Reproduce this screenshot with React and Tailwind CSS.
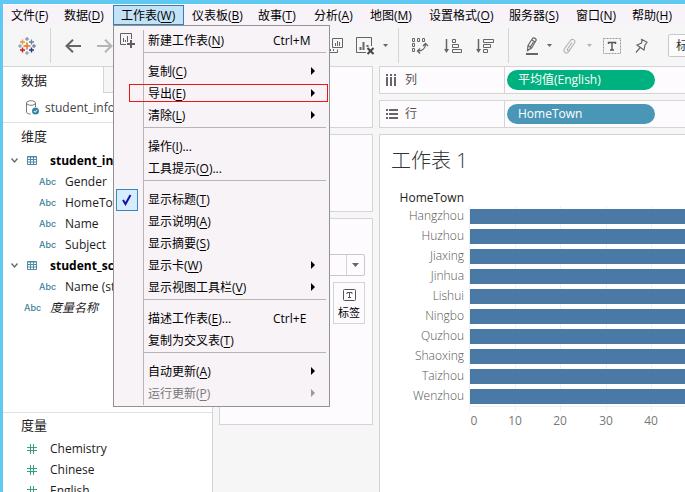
import React from "react";

const uiFont = "font-['Open_Sans','Noto_Sans_CJK_SC',sans-serif]";

const menus = [
  ["文件", "F", "w-[53px]"],
  ["数据", "D", "w-[57px]"],
  ["工作表", "W", "w-[71px]"],
  ["仪表板", "B", "w-[66px]"],
  ["故事", "T", "w-[56px]"],
  ["分析", "A", "w-[56px]"],
  ["地图", "M", "w-[59px]"],
  ["设置格式", "O", "w-[80px]"],
  ["服务器", "S", "w-[67px]"],
  ["窗口", "N", "w-[56px]"],
  ["帮助", "H", "w-[56px]"],
];

const worksheetMenu = [
  { label: "新建工作表", mnemonic: "N", shortcut: "Ctrl+M", icon: "new" },
  null,
  { label: "复制", mnemonic: "C", submenu: true },
  { label: "导出", mnemonic: "E", submenu: true, marked: true },
  { label: "清除", mnemonic: "L", submenu: true },
  null,
  { label: "操作", mnemonic: "I", more: true },
  { label: "工具提示", mnemonic: "O", more: true },
  null,
  { label: "显示标题", mnemonic: "T", icon: "check" },
  { label: "显示说明", mnemonic: "A" },
  { label: "显示摘要", mnemonic: "S" },
  { label: "显示卡", mnemonic: "W", submenu: true },
  { label: "显示视图工具栏", mnemonic: "V", submenu: true },
  null,
  { label: "描述工作表", mnemonic: "E", more: true, shortcut: "Ctrl+E" },
  { label: "复制为交叉表", mnemonic: "T" },
  null,
  { label: "自动更新", mnemonic: "A", submenu: true },
  { label: "运行更新", mnemonic: "P", submenu: true, disabled: true },
];

function NewSheetIcon() {
  return (
    <svg width="16" height="16" viewBox="0 0 16 16" fill="none" stroke="#5f5f5f">
      <path d="M6 11.5H.5V.5h11V6" />
      <path d="M3.5 5v4M5.5 7v2M7.5 3v6" />
      <path d="M11 7v8M7 11h8" strokeWidth="2" />
    </svg>
  );
}

function CheckIcon() {
  return (
    <svg width="10" height="12" viewBox="0 0 10 12" fill="none" stroke="#1111a8" strokeWidth="2">
      <path d="M1 6l2.5 4L8.5 1" />
    </svg>
  );
}

function Caret({ className }) {
  return (
    <svg className={className} width="5" height="3" viewBox="0 0 5 3" fill="currentColor">
      <path d="M0 0h5L2.5 3z" />
    </svg>
  );
}

function MenuRow({ item }) {
  return (
    <button
      type="button"
      role="menuitem"
      disabled={item.disabled}
      className="relative flex h-[22px] w-full items-stretch text-left text-black disabled:text-[#787878]"
    >
      <span className="flex w-[30px] shrink-0 items-center border-r border-[#b8b5b8] pl-[2px]">
        {item.icon === "new" && <span className="pl-1"><NewSheetIcon /></span>}
        {item.icon === "check" && (
          <span className="flex size-[22px] items-center justify-center border border-[#3c87ba] bg-[#d6ecff]">
            <CheckIcon />
          </span>
        )}
      </span>
      <span className="flex-1 whitespace-nowrap pl-1 leading-[22px]">
        {item.label}(<u className="underline-offset-2">{item.mnemonic}</u>){item.more && "..."}
      </span>
      <span className="w-14 shrink-0 leading-[22px]">
        {item.shortcut}
        {item.submenu && (
          <svg className="ml-[38px] mt-[6px]" width="4" height="8" viewBox="0 0 4 8" fill={item.disabled ? "#999" : "#000"}>
            <path d="M0 0l4 4-4 4z" />
          </svg>
        )}
      </span>
      {item.marked && <span className="absolute left-[15px] right-px top-px h-[18px] border border-[#f01414]" />}
    </button>
  );
}

function WorksheetMenu() {
  return (
    <div
      role="menu"
      className="absolute left-0 top-full z-10 w-[217px] border border-[#949194] bg-[#f7f3f7] pb-px pt-1"
    >
      {worksheetMenu.map((item, i) =>
        item ? (
          <MenuRow key={i} item={item} />
        ) : (
          <div key={i} role="separator" className="flex h-[9px]">
            <span className="w-[30px] border-r border-[#b8b5b8]" />
            <span className="mr-[3px] flex-1 border-t border-[#b8b5b8]" />
          </div>
        )
      )}
    </div>
  );
}

function MenuBar() {
  return (
    <nav className="flex h-[21px] shrink-0 border-t border-[#fdfbfd] bg-[#f7f3f8]">
      {menus.map(([label, key, width]) => {
        const open = key === "W";
        return (
          <div key={key} className="relative shrink-0">
            <button
              type="button"
              className={
                "h-5 whitespace-nowrap border px-[7px] text-left leading-[20px] text-black " +
                width +
                (open ? " border-[#3a7fb0] bg-[#c2e3f6]" : " border-transparent")
              }
            >
              {label}(<u className="underline-offset-2">{key}</u>)
            </button>
            {open && <WorksheetMenu />}
          </div>
        );
      })}
    </nav>
  );
}

function Logo() {
  return (
    <svg width="18" height="18" viewBox="0 0 18 18" fill="none">
      <path d="M9 5.5v7M5.5 9h7" stroke="#e8762d" strokeWidth="1.6" />
      <path d="M4.5 2.5v5M2 5h5" stroke="#e9963c" strokeWidth="1.3" />
      <path d="M13.5 2.5v5M11 5h5" stroke="#59879b" strokeWidth="1.3" />
      <path d="M4.5 10.5v5M2 13h5" stroke="#c72035" strokeWidth="1.5" />
      <path d="M13.5 10.5v5M11 13h5" stroke="#1f457e" strokeWidth="1.5" />
      <path d="M9 0v4M7 2h4" stroke="#5b879b" />
      <path d="M9 14v4M7 16h4" stroke="#7199a6" />
      <path d="M2 7v4M0 9h4" stroke="#7099a6" />
      <path d="M16 7v4M14 9h4" stroke="#5b6591" />
    </svg>
  );
}

function ToolButton({ label, className, children }) {
  return (
    <button type="button" aria-label={label} className={"flex shrink-0 items-center justify-center " + className}>
      {children}
    </button>
  );
}

function Divider({ className }) {
  return <span className={"h-[35px] w-px shrink-0 bg-[#d4d4d4] " + className} />;
}

function Toolbar() {
  return (
    <div className="flex h-[41px] shrink-0 items-center bg-[#f6f6f6] text-[#666]">
      <ToolButton label="Tableau" className="w-[47px]"><Logo /></ToolButton>
      <Divider className="" />
      <ToolButton label="撤消" className="ml-[14px] w-4">
        <svg width="16" height="14" viewBox="0 0 16 14" fill="none" stroke="#666" strokeWidth="2"><path d="M16 7H1.5M8 .8L1.5 7 8 13.2" /></svg>
      </ToolButton>
      <ToolButton label="重做" className="ml-4 w-4">
        <svg width="16" height="14" viewBox="0 0 16 14" fill="none" stroke="#b4b4b4" strokeWidth="2"><path d="M0 7h14.500M8 .8L14.500 7 8 13.200" /></svg>
      </ToolButton>
      <ToolButton label="复制工作表" className="ml-[212px] w-[18px]">
        <svg width="18" height="18" viewBox="0 0 18 18" fill="none" stroke="#666">
          <path d="M7.500 1.500h10v9h-10z" /><path d="M10.500 6v3M12.500 4v5M14.500 5v4" />
          <path d="M5 6.500H.5v9h12v-3M3.500 11v3M5.500 12v2M8.500 12v2" />
        </svg>
      </ToolButton>
      <ToolButton label="清除工作表" className="ml-3 w-5">
        <svg width="20" height="18" viewBox="0 0 20 18" fill="none" stroke="#666">
          <path d="M16.500 9V.5H1.500v15H11" />
          <path d="M5.500 10v3M8.500 5v8M12.500 8v2" strokeWidth="2" />
          <path d="M12.500 11l6 6M18.500 11l-6 6" stroke="#444" strokeWidth="2" />
        </svg>
      </ToolButton>
      <Caret className="ml-2 shrink-0" />
      <Divider className="ml-[10px]" />
      <ToolButton label="交换行和列" className="ml-3 w-[18px]">
        <svg width="18" height="17" viewBox="0 0 18 17" fill="none" stroke="#666">
          <path d="M1.500 1.500h2v3h-2zM6.500 1.500h2v3h-2zM11.500 1.500h2v3h-2zM1.500 6.500h2v3h-2zM1.500 11.500h2v3h-2z" />
          <path d="M6.500 14c5 0 8-3 8-7M12 9l2.500-2.500L17 9M9 11.500L6.500 14 9 16.500" strokeWidth="1.300" />
        </svg>
      </ToolButton>
      <ToolButton label="升序排序" className="ml-[15px] w-[18px]">
        <svg width="18" height="16" viewBox="0 0 18 16" fill="none" stroke="#666">
          <path d="M2.500 1v12" strokeWidth="1.500" /><path d="M0 11h5l-2.500 4z" fill="#666" stroke="none" />
          <path d="M8.500 1.500h3v3h-3zM8.500 6.500h6v3h-6zM8.500 11.500h9v3h-9z" />
        </svg>
      </ToolButton>
      <ToolButton label="降序排序" className="ml-[14px] w-[18px]">
        <svg width="18" height="16" viewBox="0 0 18 16" fill="none" stroke="#666">
          <path d="M2.500 1v12" strokeWidth="1.500" /><path d="M0 11h5l-2.500 4z" fill="#666" stroke="none" />
          <path d="M7.500 1.500h10v3h-10zM7.500 6.500h7v3h-7zM7.500 11.500h4v3h-4z" />
        </svg>
      </ToolButton>
      <Divider className="ml-[14px]" />
      <ToolButton label="突出显示" className="ml-4 w-[13px]">
        <svg width="13" height="18" viewBox="0 0 13 18" fill="none" stroke="#666" strokeWidth="1.200">
          <path d="M3 8.500L7.500 1.500c1-1.500 4.500.5 3.500 2L6.500 11 2.500 13.500zM3 8.500L6.500 11M7 3l3.500 2.200M8.500 5L5.500 9.500" />
          <path d="M1 17h12" strokeWidth="2" />
        </svg>
      </ToolButton>
      <Caret className="ml-[9px] shrink-0" />
      <ToolButton label="组成员" className="ml-[11px] w-[13px]">
        <svg width="13" height="16" viewBox="0 0 13 16" fill="none" stroke="#b4b4b4" strokeWidth="1.200">
          <path d="M9 4.500L4.500 11c-.8 1.500 1 2.500 2 1L11.500 5c1.500-2.500-2-5-4-2.500L1.500 10.500C-.5 14 3.500 16.500 5.500 14L8.500 9.500" />
        </svg>
      </ToolButton>
      <Caret className="ml-[11px] shrink-0 text-[#b4b4b4]" />
      <ToolButton label="显示标记标签" className="ml-[11px] w-[18px]">
        <svg width="18" height="16" viewBox="0 0 18 16" fill="none" stroke="#777">
          <path d="M.5.5h17v15H.5z" stroke="#999" strokeDasharray="2 1" />
          <path d="M5.500 6V4.500h7V6M9 4.500V12M7 12h4" stroke="#555" strokeWidth="1.400" />
        </svg>
      </ToolButton>
      <ToolButton label="固定轴" className="ml-[14px] w-[14px]">
        <svg width="14" height="16" viewBox="0 0 14 16" fill="none" stroke="#666" strokeWidth="1.200">
          <path d="M6 1l6.500 3.500M7 1.500L6.500 5 2 7l7 5 1-5 2-2.500M5.200 9.500L1 14.500" />
        </svg>
      </ToolButton>
      <select aria-label="适合" className="ml-[19px] h-[23px] w-[90px] shrink-0 appearance-none rounded-xs border border-[#c8c8c8] bg-[#fdfcfd] pl-[7px] text-xs text-[#333]">
        <option>标准</option>
      </select>
    </div>
  );
}

function TableIcon() {
  return (
    <svg width="10" height="9" viewBox="0 0 10 9" fill="none" stroke="#4e8ba6">
      <path d="M.5.5h9v8h-9zM0 1h10M0 3.500h10M0 6h10M3.500 1v8M6.500 1v8" />
    </svg>
  );
}

function TableRow({ children }) {
  return (
    <li className="flex h-[21px] items-center pl-2 font-bold text-black">
      <svg className="mr-[9px]" width="7" height="5" viewBox="0 0 7 5" fill="none" stroke="#666" strokeWidth="1.300"><path d="M.5.5l3 3.500 3-3.500" /></svg>
      <TableIcon />
      <span className="ml-[13px]">{children}</span>
    </li>
  );
}

function Abc() {
  return <span className="w-[26px] shrink-0 font-[Inter,sans-serif] text-[9px] font-medium not-italic text-[#3b7f9c]">Abc</span>;
}

function FieldRow({ children }) {
  return (
    <li className="flex h-[21px] items-center whitespace-nowrap pl-9 text-[#1c1c1c]">
      <Abc />
      {children}
    </li>
  );
}

function MeasureRow({ children }) {
  return (
    <li className="flex h-[21px] items-center pl-6 text-[#1c1c1c]">
      <svg className="mr-4" width="10" height="10" viewBox="0 0 10 10" fill="none" stroke="#35a278"><path d="M3.500 0v10M6.500 0v10M0 3.500h10M0 6.500h10" /></svg>
      <span className="-ml-[3px]">{children}</span>
    </li>
  );
}

function DataPane() {
  return (
    <aside className="flex w-[210px] shrink-0 flex-col overflow-hidden border-r border-t border-[#d4d4d4] bg-white">
      <div className="flex h-[26px] shrink-0">
        <button type="button" className="w-[100px] pl-[18px] text-left text-[13px] leading-[26px] text-[#222]">数据</button>
        <div className="flex-1 border-b border-l border-[#d4d4d4] bg-[#f6f6f6]" />
      </div>
      <div className="flex h-[30px] shrink-0 items-center border-b border-[#e0e0e0] pl-[23px] text-[#444]">
        <svg className="mr-[6px]" width="13" height="15" viewBox="0 0 13 15" fill="none" stroke="#777">
          <path d="M.5 3c0-3 9-3 9 0s-9 3-9 0v9c0 1 1.500 2 4 2M9.500 3v4" />
          <circle cx="9.500" cy="11" r="3.500" fill="#3584a4" stroke="none" />
          <path d="M7.800 11l1.300 1.300 2.200-2.500" stroke="#fff" />
        </svg>
        student_info
      </div>
      <h2 className="h-[27px] shrink-0 pl-[18px] text-[13px] leading-[27px] text-[#222]">维度</h2>
      <ul className="flex-1">
        <TableRow>student_info</TableRow>
        <FieldRow>Gender</FieldRow>
        <FieldRow>HomeTown</FieldRow>
        <FieldRow>Name</FieldRow>
        <FieldRow>Subject</FieldRow>
        <TableRow>student_score</TableRow>
        <FieldRow>Name (student_score)</FieldRow>
        <li className="flex h-[21px] items-center pl-[21px] italic text-[#1c1c1c]">
          <Abc />
          度量名称
        </li>
      </ul>
      <section className="h-20 shrink-0 border-t border-[#e0e0e0]">
        <h2 className="h-[25px] pl-[18px] text-[13px] leading-[25px] text-[#222]">度量</h2>
        <ul>
          <MeasureRow>Chemistry</MeasureRow>
          <MeasureRow>Chinese</MeasureRow>
          <MeasureRow>English</MeasureRow>
        </ul>
      </section>
    </aside>
  );
}

function Cards() {
  return (
    <div className="flex w-[166px] shrink-0 flex-col gap-[6px] bg-[#f6f6f6] pl-[6px] pr-[6px]">
      <div className="h-[62px] border border-[#d4d4d4] bg-[#fefbff]" />
      <div className="h-[78px] border border-[#d4d4d4] bg-[#fefbff]" />
      <div className="flex h-[207px] flex-col gap-[6px] border border-[#d4d4d4] bg-[#fefbff] pl-2 pr-[7px] pt-[35px]">
        <div className="relative">
          <select aria-label="标记类型" className="block h-[22px] w-full appearance-none rounded-xs border border-[#c8c8c8] bg-[#fefbff]">
            <option></option>
          </select>
          <span className="pointer-events-none absolute inset-y-px right-px flex w-[18px] items-center justify-center border-l border-[#d4d4d4] text-[#666]">
            <svg width="7" height="4" viewBox="0 0 7 4" fill="currentColor"><path d="M0 0h7L3.500 4z" /></svg>
          </span>
        </div>
        <button type="button" className="flex h-[42px] w-8 flex-col items-center self-end border border-[#d4d4d4] pt-[6px] text-[11px] text-black">
          <svg width="13" height="12" viewBox="0 0 13 12" fill="none" stroke="#555">
            <rect x=".5" y=".5" width="12" height="11" rx="1" />
            <path d="M4 5V3.500h5V5M6.500 3.500V9M5 8.500h3" />
          </svg>
          <span className="mt-1 leading-4">标签</span>
        </button>
      </div>
    </div>
  );
}

function Shelf({ label, icon, pill, pillClass }) {
  return (
    <div className="flex h-7 shrink-0 items-stretch border border-r-0 border-[#d4d4d4] bg-[#fefbff]">
      <div className="flex w-[125px] shrink-0 items-center border-r border-[#d4d4d4] pl-[6px] text-[#555]">
        <span className="w-[19px]">{icon}</span>
        {label}
      </div>
      <button type="button" className={"ml-[2px] h-5 w-[148px] self-center rounded-full pl-[11px] text-left leading-5 text-white " + pillClass}>
        {pill}
      </button>
    </div>
  );
}

const towns = [
  ["Hangzhou", 72],
  ["Huzhou", 72],
  ["Jiaxing", 72],
  ["Jinhua", 72],
  ["Lishui", 72],
  ["Ningbo", 72],
  ["Quzhou", 72],
  ["Shaoxing", 72],
  ["Taizhou", 72],
  ["Wenzhou", 72],
];
const ticks = [0, 10, 20, 30, 40];
const unit = 4.55;

function Worksheet() {
  return (
    <main className="flex-1 overflow-hidden border-l border-t border-[#d4d4d4] bg-white">
      <h1 className="pl-[11px] pt-[11px] text-xl font-light leading-[30px] text-[#333]">工作表 1</h1>
      <div className="mt-[14px] w-[84px] text-right font-medium leading-4 text-[#222]">HomeTown</div>
      <div className="flex">
        <ul className="w-[84px] shrink-0 text-right font-light text-[#555]">
          {towns.map(([name]) => (
            <li key={name} className="h-5 leading-5">{name}</li>
          ))}
        </ul>
        <div className="relative ml-[5px] h-[226px] min-w-0 flex-1">
          {ticks.map((t) => (
            <span key={t} className="absolute top-0 h-[205px] w-px bg-[#f0f0f0]" style={{ left: Math.round(t * unit) }} />
          ))}
          <div className="relative border-b border-[#f0f0f0] pl-px">
            {towns.map(([name, value]) => (
              <div key={name} className="flex h-5 items-center">
                <div className="h-[15px] shrink-0 bg-[#4b79a6]" style={{ width: value * unit }} />
              </div>
            ))}
          </div>
          {ticks.map((t) => (
            <span
              key={t}
              className="absolute top-[205px] w-8 text-center leading-5 text-[#787878]"
              style={{ left: (t === 0 ? 5 : Math.round(t * unit)) - 16 }}
            >
              {t}
            </span>
          ))}
        </div>
      </div>
    </main>
  );
}

export default function App() {
  return (
    <div className={"flex h-screen flex-col overflow-hidden border-l-[3px] border-t-4 border-[#60c9f1] bg-[#f6f6f6] text-xs " + uiFont}>
      <MenuBar />
      <Toolbar />
      <div className="flex min-h-0 flex-1">
        <DataPane />
        <Cards />
        <div className="flex min-w-0 flex-1 flex-col gap-[6px]">
          <Shelf
            label="列"
            icon={
              <svg width="11" height="12" viewBox="0 0 11 12" fill="#666"><path d="M0 0h2v2H0zM4 0h2v2H4zM8 0h2v2H8zM0 3h2v9H0zM4 3h2v9H4zM8 3h2v9H8z" /></svg>
            }
            pill="平均值(English)"
            pillClass="bg-[#00b180]"
          />
          <Shelf
            label="行"
            icon={
              <svg width="12" height="10" viewBox="0 0 12 10" fill="#666"><path d="M0 0h2v2H0zM0 4h2v2H0zM0 8h2v2H0zM3 0h9v2H3zM3 4h9v2H3zM3 8h9v2H3z" /></svg>
            }
            pill="HomeTown"
            pillClass="bg-[#4a96b6]"
          />
          <Worksheet />
        </div>
      </div>
    </div>
  );
}
